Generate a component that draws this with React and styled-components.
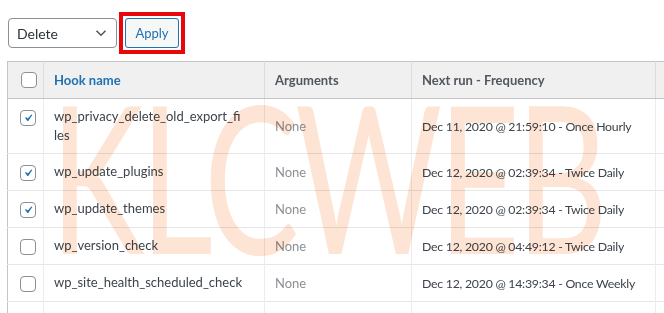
import React from 'react';
import styled, { createGlobalStyle } from 'styled-components';

const GlobalStyle = createGlobalStyle`
  html, body {
    margin: 0;
    padding: 0;
    background: #fff;
    overflow: hidden;
  }
  body {
    font-family: "Lato", "Noto Sans", sans-serif;
    font-size: 13px;
    color: #3c434a;
  }
`;

const Page = styled.div`
  position: relative;
  padding: 12px 0 0 7px;
  width: 760px;
`;

const Toolbar = styled.div`
  display: flex;
  align-items: center;
  gap: 2px;
  margin-left: 1px;
  margin-bottom: 7px;
`;

const SelectBox = styled.div`
  box-sizing: border-box;
  width: 109px;
  height: 30px;
  border: 1px solid #8c8f94;
  border-radius: 4px;
  display: flex;
  align-items: center;
  justify-content: space-between;
  padding: 0 9px 0 8px;
  font-size: 14px;
  color: #2c3338;
  background: #fff;
`;

const Highlight = styled.span`
  display: inline-flex;
  border: 4px solid #e8070a;
  padding: 2px;
`;

const ApplyButton = styled.button`
  box-sizing: border-box;
  height: 30px;
  width: 54px;
  border: 1px solid #2271b1;
  border-radius: 3px;
  background: #f6f7f7;
  color: #2271b1;
  font-family: inherit;
  font-size: 13px;
  padding: 0;
`;

const Table = styled.table`
  border-collapse: collapse;
  border: 1px solid #c3c4c7;
  width: 720px;
  table-layout: fixed;
  background: #fff;
`;

const HeadCell = styled.th`
  background: #f0f0f1;
  text-align: left;
  font-weight: 700;
  font-size: 13px;
  color: ${p => (p.$sorted ? '#2271b1' : '#50575e')};
  height: 36px;
  padding: 0 10px;
  border-bottom: 1px solid #c3c4c7;
  border-left: 1px solid #dcdcde;
  white-space: nowrap;
  &:first-child {
    border-left: none;
    padding: 0 0 0 13px;
  }
`;

const Row = styled.tr`
  border-top: 1px solid #e6e6e8;
  &:first-child {
    border-top: none;
  }
`;

const Cell = styled.td`
  height: 37px;
  padding: 8px 10px 8px;
  box-sizing: border-box;
  vertical-align: middle;
  border-left: 1px solid #ececee;
  color: #3c434a;
  line-height: 19px;
  white-space: nowrap;
  overflow: hidden;
  &:first-child {
    border-left: none;
    padding: 11px 0 0 12px;
    vertical-align: top;
  }
`;

const NameCell = styled(Cell)`
  vertical-align: top;
  white-space: normal;
  word-break: break-all;
  padding-right: 21px;
`;

const ArgCell = styled(Cell)`
  color: #8c8f94;
`;

const DateCell = styled(Cell)`
  font-size: 12.3px;
  letter-spacing: -0.25px;
`;

const CheckBox = styled.span`
  box-sizing: border-box;
  display: flex;
  align-items: center;
  justify-content: center;
  width: 16px;
  height: 16px;
  border: 1px solid #8c8f94;
  border-radius: 4px;
  background: #fff;
`;

const Watermark = styled.div`
  position: absolute;
  left: 50px;
  top: 72px;
  font-family: "Lato", "Roboto", sans-serif;
  font-weight: 400;
  font-size: 206px;
  line-height: 1;
  letter-spacing: -6px;
  color: #f79a5e;
  opacity: 0.27;
  transform-origin: left top;
  transform: scaleX(0.69);
  pointer-events: none;
  mix-blend-mode: multiply;
  white-space: nowrap;
`;

const Check = ({ checked }) => (
  <CheckBox>
    {checked && (
      <svg width="14" height="14" viewBox="0 0 20 20">
        <path d="M14.83 4.89l1.34.94-5.81 8.38H9.02L5.78 9.67l1.34-1.25 2.57 2.4z" fill="#2271b1" />
      </svg>
    )}
  </CheckBox>
);

const rows = [
  { name: 'wp_privacy_delete_old_export_files', next: 'Dec 11, 2020 @ 21:59:10 - Once Hourly', checked: true },
  { name: 'wp_update_plugins', next: 'Dec 12, 2020 @ 02:39:34 - Twice Daily', checked: true },
  { name: 'wp_update_themes', next: 'Dec 12, 2020 @ 02:39:34 - Twice Daily', checked: true },
  { name: 'wp_version_check', next: 'Dec 12, 2020 @ 04:49:12 - Twice Daily', checked: false },
  { name: 'wp_site_health_scheduled_check', next: 'Dec 12, 2020 @ 14:39:34 - Once Weekly', checked: false },
  { name: 'wp_scheduled_delete', next: 'Dec 12, 2020 @ 19:03:10 - Once Daily', checked: false },
];

export default function App() {
  return (
    <>
      <GlobalStyle />
      <Page>
        <Toolbar>
          <SelectBox>
            <span>Delete</span>
            <svg width="12" height="8" viewBox="0 0 12 8">
              <path d="M1.5 1.8l4.5 4.4 4.5-4.4" stroke="#50575e" strokeWidth="1.6" fill="none" />
            </svg>
          </SelectBox>
          <Highlight>
            <ApplyButton>Apply</ApplyButton>
          </Highlight>
        </Toolbar>
        <Table>
          <colgroup>
            <col style={{ width: 36 }} />
            <col style={{ width: 221 }} />
            <col style={{ width: 147 }} />
            <col style={{ width: 244 }} />
            <col />
          </colgroup>
          <thead>
            <tr>
              <HeadCell>
                <Check />
              </HeadCell>
              <HeadCell $sorted>Hook name</HeadCell>
              <HeadCell>Arguments</HeadCell>
              <HeadCell>Next run - Frequency</HeadCell>
              <HeadCell />
            </tr>
          </thead>
          <tbody>
            {rows.map(r => (
              <Row key={r.name}>
                <Cell>
                  <Check checked={r.checked} />
                </Cell>
                <NameCell>{r.name}</NameCell>
                <ArgCell>None</ArgCell>
                <DateCell>{r.next}</DateCell>
                <Cell />
              </Row>
            ))}
          </tbody>
        </Table>
        <Watermark>KLCWEB</Watermark>
      </Page>
    </>
  );
}
